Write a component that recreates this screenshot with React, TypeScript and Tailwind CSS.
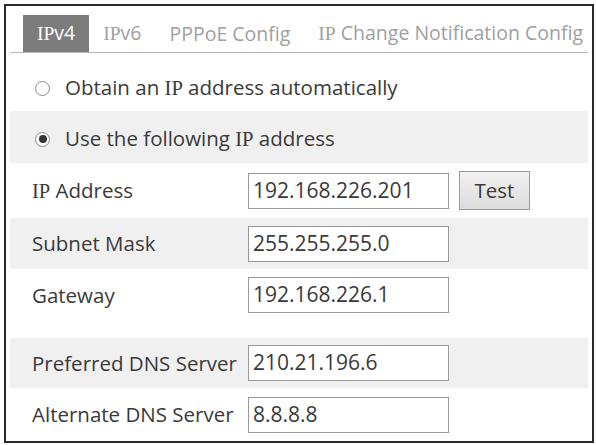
import React from 'react';

const serif = { fontFamily: '"Liberation Serif", serif' };

// the "IP" glyphs fall back to a serif face in the original UI
function Ip() {
	return <span style={serif}>IP</span>;
}

function withIp(text: string) {
	const parts = text.split('IP');
	return parts.map((p, i) => (
		<React.Fragment key={i}>
			{i > 0 && <Ip />}
			{p}
		</React.Fragment>
	));
}

const tabs = ['IPv4', 'IPv6', 'PPPoE Config', 'IP Change Notification Config'];

function Radio({ checked }: { checked?: boolean }) {
	return (
		<span className="flex h-[15px] w-[15px] items-center justify-center rounded-full border border-[#8a8a8a] bg-white">
			{checked && <span className="h-[8px] w-[8px] rounded-full bg-[#333]" />}
		</span>
	);
}

function Field({ label, value, gray, extra, className }: { label: string; value: string; gray?: boolean; extra?: React.ReactNode; className?: string }) {
	return (
		<div className={`flex items-center ${gray ? 'bg-[#f0f0f0]' : 'bg-white'} ${className ?? ''}`}>
			<div className="w-[238px] pl-[22px]">{withIp(label)}</div>
			<div className="flex h-[36px] w-[201px] items-center border-[1.5px] border-[#9a9a9a] bg-white pl-[4px] text-[21px]">{value}</div>
			{extra}
		</div>
	);
}

export default function App() {
	return (
		<div className="bg-white p-[4px]" style={{ fontFamily: '"Open Sans", "Noto Sans", sans-serif' }}>
			<div className="h-[439px] w-[590px] border-2 border-[#2a2a2a] bg-white text-[20.5px] text-[#3a3a3a]">
				{/* tab strip */}
				<div className="mx-[4px] flex h-[47px] items-end border-b border-[#b5b5b5] pl-[13px]">
					{tabs.map((t, i) => (
						<div
							key={t}
							className={`flex h-[37px] items-center px-[14px] text-[19.5px] whitespace-nowrap ${i === 0 ? 'bg-[#7c7c7c] text-white' : 'text-[#a0a0a0]'}`}
						>
							<span>{withIp(t)}</span>
						</div>
					))}
				</div>

				<div className="mx-[4px] flex flex-col">
					<div className="flex h-[58px] items-center gap-[15px] pl-[25px] pt-[12px]">
						<Radio />
						<span>Obtain an {withIp('IP')} address automatically</span>
					</div>
					<div className="flex h-[52px] items-center gap-[15px] bg-[#f0f0f0] pl-[25px] pt-[4px]">
						<Radio checked />
						<span>Use the following {withIp('IP')} address</span>
					</div>
					<Field
						label="IP Address"
						value="192.168.226.201"
						className="h-[55px]"
						extra={
							<button className="ml-[10px] h-[39px] w-[71px] border border-[#9a9a9a] bg-gradient-to-b from-[#f2f2f2] to-[#dcdcdc] text-[20.5px] text-[#3a3a3a]">
								Test
							</button>
						}
					/>
					<Field label="Subnet Mask" value="255.255.255.0" gray className="h-[51px]" />
					<Field label="Gateway" value="192.168.226.1" className="h-[52px]" />
					<div className="h-[17px]" />
					<Field label="Preferred DNS Server" value="210.21.196.6" gray className="h-[50px]" />
					<Field label="Alternate DNS Server" value="8.8.8.8" className="h-[53px]" />
				</div>
			</div>
		</div>
	);
}
